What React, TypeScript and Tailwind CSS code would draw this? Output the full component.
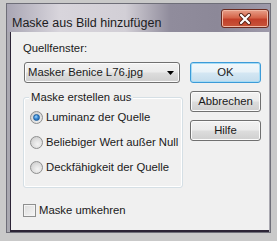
import React from 'react';

function Radio({ checked }: { checked?: boolean }) {
  return (
    <span className="flex h-[13px] w-[13px] shrink-0 items-center justify-center rounded-full border border-[#8e8f8f] bg-[radial-gradient(circle_at_60%_65%,#f4f4f4_0%,#dcdcdc_55%,#c4c4c4_100%)]">
      {checked && (
        <span className="h-[7px] w-[7px] rounded-full border border-[#1d5d9b] bg-[radial-gradient(circle_at_40%_35%,#9fd7ff_0%,#3a8ad6_45%,#1b5aa0_100%)]" />
      )}
    </span>
  );
}

function DialogButton({ label, primary }: { label: string; primary?: boolean }) {
  return (
    <button
      type="button"
      className={
        primary
          ? 'flex h-[21px] w-[71px] items-center justify-center rounded-[3px] border border-[#3c9bd8] bg-[linear-gradient(180deg,#f2f8fb_0%,#e8f2f8_48%,#d4e7f3_52%,#c4dcec_100%)] text-[#1a1a1a] shadow-[inset_0_0_0_1px_#a6dcf5]'
          : 'flex h-[21px] w-[71px] items-center justify-center rounded-[3px] border border-[#707070] bg-[linear-gradient(180deg,#f2f2f2_0%,#ebebeb_48%,#dddddd_52%,#cfcfcf_100%)] text-[#1a1a1a] shadow-[inset_0_0_0_1px_#fbfbfb]'
      }
    >
      {label}
    </button>
  );
}

export default function App() {
  return (
    <div className="h-[241px] w-[277px] overflow-hidden bg-[#c9c9c9] pl-[6px] pt-[3px] font-['Liberation_Sans',Arial,sans-serif] text-[11.3px] text-[#1a1a1a]">
      <div className="flex h-[230px] w-[265px] flex-col border border-[#6e6e78] bg-[#a9a8b0]">
        {/* title bar */}
        <div className="flex h-[28px] shrink-0 items-start justify-between bg-[linear-gradient(90deg,#a9a6b4_0%,#d8d5dc_20%,#d2cfd6_45%,#908c9c_62%,#8c8898_80%,#9e9aaa_100%)] pl-[5px] pr-[1px]">
          <span className="mt-[13px] whitespace-nowrap text-[12.5px] leading-none text-[#1c1c22]">Maske aus Bild hinzufügen</span>
          <span className="mt-[5px] flex h-[19px] w-[48px] items-center justify-center rounded-[3px] border border-[#6b2a1f] bg-[linear-gradient(180deg,#e8a08a_0%,#d5654a_45%,#c2402a_55%,#c8553a_100%)] shadow-[inset_0_0_0_1px_#f0b8a4]">
            <svg width="14" height="12" viewBox="0 0 14 12">
              <path d="M3 2 L11 10 M11 2 L3 10" stroke="#5a2418" strokeWidth="4" strokeLinecap="round" />
              <path d="M3 2 L11 10 M11 2 L3 10" stroke="#ffffff" strokeWidth="2.2" strokeLinecap="round" />
            </svg>
          </span>
        </div>

        {/* client area */}
        <div className="ml-[3px] mr-[1px] flex flex-1 border-b-2 border-l border-[#2c2436] bg-[#f0f0f0] pl-[12px] whitespace-nowrap">
          <div className="flex w-[160px] shrink-0 flex-col">
            <span className="mt-[9px] leading-[15px]">Quellfenster:</span>
            <div className="ml-[1px] mt-[6px] flex h-[21px] w-[156px] items-center justify-between rounded-[3px] border border-[#707070] bg-[linear-gradient(180deg,#f2f2f2_0%,#ebebeb_48%,#dddddd_52%,#cfcfcf_100%)] pl-[3px] pr-[5px] shadow-[inset_0_0_0_1px_#fbfbfb]">
              <span>Masker Benice L76.jpg</span>
              <svg width="7" height="4" viewBox="0 0 7 4">
                <path d="M0 0 H7 L3.5 4 Z" fill="#000" />
              </svg>
            </div>

            <div className="relative mt-[14px] rounded-[3px] border border-[#d5dfe5] px-[6px] pb-[7px] pt-[7px] shadow-[inset_0_0_0_1px_#ffffff]">
              <span className="absolute -top-[8px] left-[5px] bg-[#f0f0f0] px-[2px] leading-[15px]">
                Maske erstellen aus
              </span>
              <div className="flex flex-col">
                <label className="flex h-[25px] items-center gap-[3px]">
                  <Radio checked />
                  <span>Luminanz der Quelle</span>
                </label>
                <label className="flex h-[25px] items-center gap-[3px]">
                  <Radio />
                  <span>Beliebiger Wert außer Null</span>
                </label>
                <label className="flex h-[25px] items-center gap-[3px]">
                  <Radio />
                  <span>Deckfähigkeit der Quelle</span>
                </label>
              </div>
            </div>

            <label className="mt-[15px] flex h-[15px] items-center gap-[3px]">
              <span className="h-[13px] w-[13px] shrink-0 border border-[#8e8f8f] bg-[linear-gradient(135deg,#dcdcdc_0%,#f6f6f6_100%)] shadow-[inset_0_0_0_1px_#f4f4f4]" />
              <span>Maske umkehren</span>
            </label>
          </div>

          <div className="ml-[7px] mt-[30px] flex flex-col gap-[8px]">
            <DialogButton label="OK" primary />
            <DialogButton label="Abbrechen" />
            <DialogButton label="Hilfe" />
          </div>
        </div>
      </div>
    </div>
  );
}
